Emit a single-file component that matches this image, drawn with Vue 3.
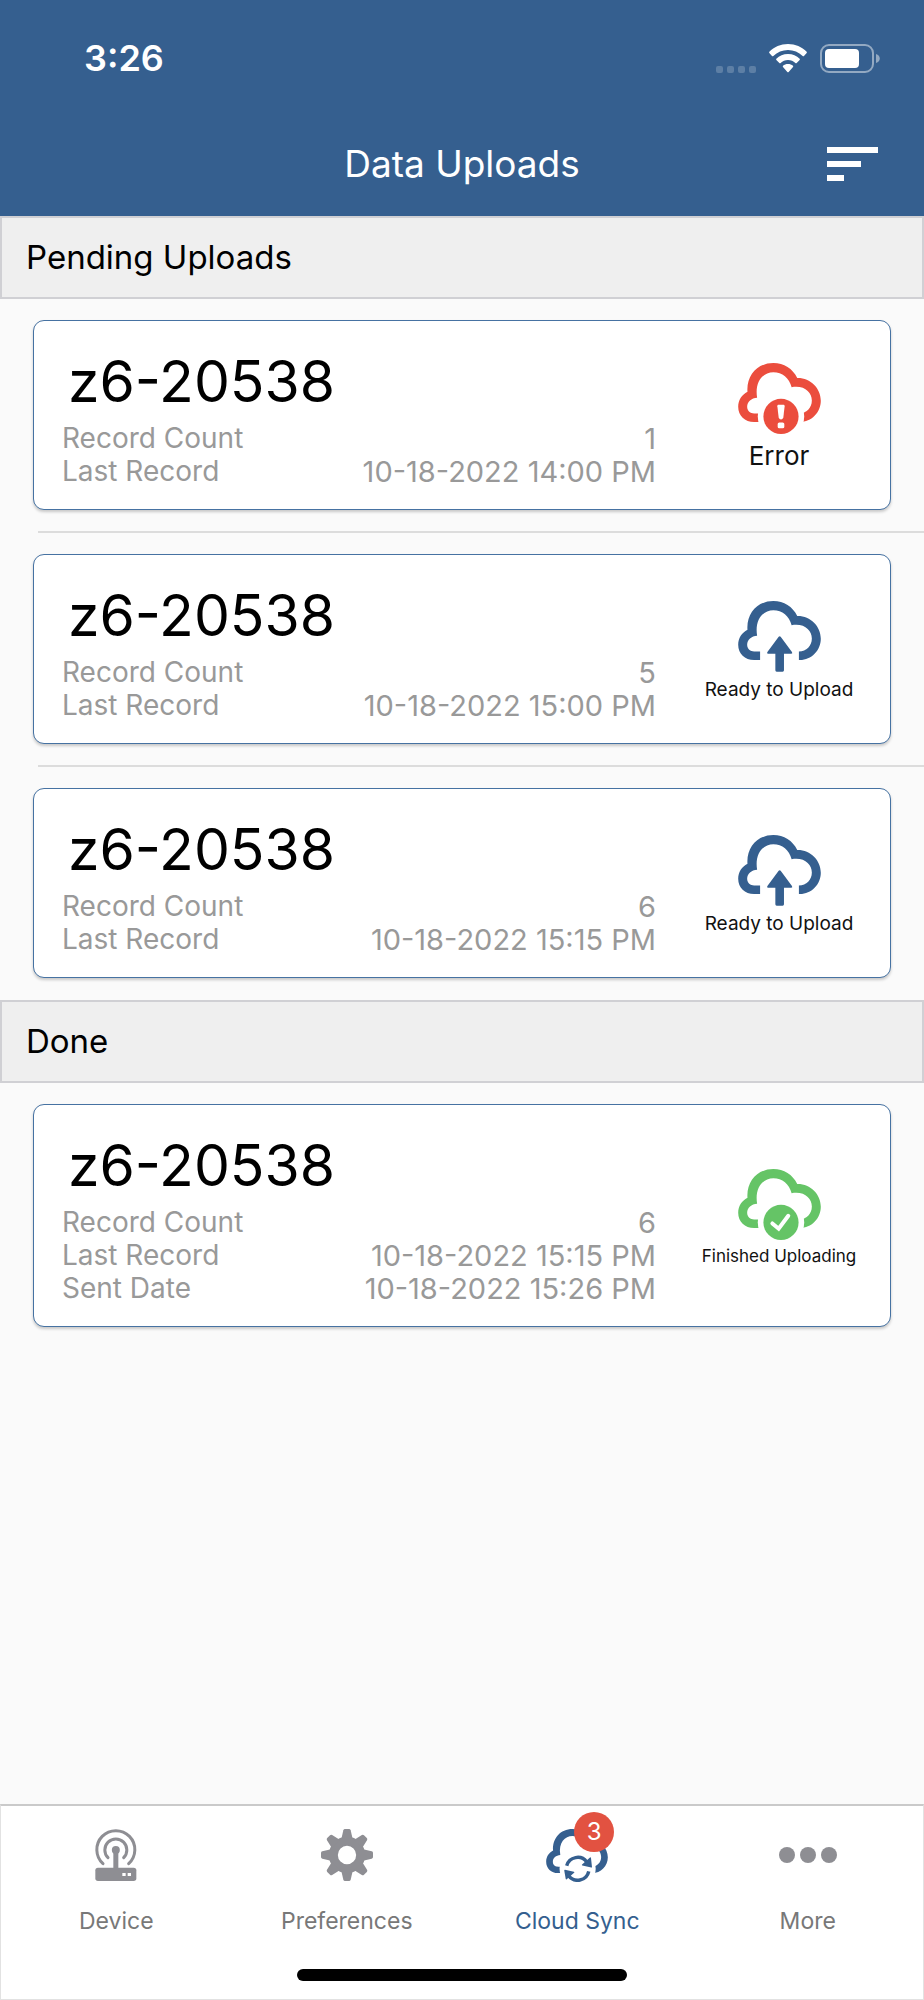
<template>
  <div class="app">
    <header class="header">
      <div class="status-bar">
        <span class="time">3:26</span>
        <div class="status-icons">
          <span class="signal"><i v-for="n in 4" :key="n"></i></span>
          <svg class="wifi" width="38" height="29" viewBox="0 0 114 87" fill="#fff">
            <path d="M57 0C35 0 15 9 1 23c-1 1-1 3 0 4l8 9c1 1 3 1 4 0C25 25 40 18 57 18s32 7 44 18c1 1 3 1 4 0l8-9c1-1 1-3 0-4C99 9 79 0 57 0z" />
            <path d="M57 30c-14 0-26 5-35 14-1 1-1 3 0 4l9 9c1 1 3 1 4 0 6-5 13-9 22-9s16 4 22 9c1 1 3 1 4 0l9-9c1-1 1-3 0-4-9-9-21-14-35-14z" />
            <path d="M57 60c-6 0-11 2-15 5-1 1-1 3 0 4l13 15c1 1 3 1 4 0l13-15c1-1 1-3 0-4-4-3-9-5-15-5z" />
          </svg>
          <svg width="60" height="29" viewBox="0 0 60 29">
            <rect x="1" y="1" width="52" height="27" rx="8" fill="none" stroke="#93a9c2" stroke-width="2" />
            <rect x="5" y="5" width="34" height="19" rx="4" fill="#fff" />
            <path d="M56 10c5 1 5 8 0 9z" fill="#93a9c2" />
          </svg>
        </div>
      </div>
      <div class="nav-bar">
        <h1 class="title">Data Uploads</h1>
        <button class="sort-btn" type="button" aria-label="Sort">
          <svg width="51" height="34" viewBox="0 0 51 34" fill="#fff">
            <rect width="51" height="6" />
            <rect y="14" width="34" height="6" />
            <rect y="28" width="17" height="6" />
          </svg>
        </button>
      </div>
    </header>

    <main class="content">
      <section v-for="section in sections" :key="section.title">
        <h2 class="section-title">{{ section.title }}</h2>
        <ul class="upload-list">
          <li v-for="(item, index) in section.items" :key="index" class="upload-item">
            <article class="card">
              <div class="details">
                <h3 class="device-name">{{ item.name }}</h3>
                <dl class="records">
                  <div v-for="row in item.rows" :key="row.label" class="record">
                    <dt>{{ row.label }}</dt>
                    <dd>{{ row.value }}</dd>
                  </div>
                </dl>
              </div>
              <div class="status" :class="item.status">
                <svg width="83" height="71" viewBox="0 0 249 214" fill="currentColor">
                  <path :d="cloudPath" />
                  <path v-if="item.status === 'ready'" d="M122 108q3-4 6 0l34 46q3 5-2 5h-22v50q0 4-4 4h-18q-4 0-4-4v-50H90q-5 0-2-5z" />
                  <template v-else>
                    <circle cx="129" cy="161" r="70" fill="#fff" />
                    <circle cx="129" cy="161" r="53" />
                    <template v-if="item.status === 'error'">
                      <path d="M121 126h16q3 0 3 4l-4 34q-2 6-7 6t-7-6l-4-34q0-4 3-4z" fill="#fff" />
                      <rect x="119" y="179" width="20" height="18" rx="5" fill="#fff" />
                    </template>
                    <path v-else d="M103 164l19 16 29-39" fill="none" stroke="#fff" stroke-width="12" stroke-linecap="round" stroke-linejoin="miter" />
                  </template>
                </svg>
                <span class="status-text">{{ statusText[item.status] }}</span>
              </div>
            </article>
          </li>
        </ul>
      </section>
    </main>

    <footer class="tab-bar">
      <nav class="tabs">
        <a
          v-for="tab in tabs"
          :key="tab.id"
          href="#"
          class="tab"
          :class="{ active: activeTab === tab.id }"
          @click.prevent="activeTab = tab.id"
        >
          <span class="tab-icon">
            <svg v-if="tab.id === 'device'" width="42" height="52" viewBox="0 0 126 156" fill="none" stroke="currentColor" stroke-width="9" stroke-linecap="round">
              <path d="M24 104A57 57 0 1 1 101 104" />
              <path d="M39 86A33 33 0 1 1 86 86" />
              <path d="M62.500 63V120" stroke-width="15" />
              <circle cx="62.500" cy="63" r="12" fill="currentColor" stroke="none" />
              <rect x="1" y="116" width="123" height="40" rx="8" fill="currentColor" stroke="none" />
              <path d="M82 132h10v9H82zM98 132h10v9H98z" fill="#fff" stroke="none" />
            </svg>
            <svg v-else-if="tab.id === 'preferences'" width="52" height="52" viewBox="0 0 156 156" fill="currentColor">
              <circle cx="78" cy="78" r="41" fill="none" stroke="currentColor" stroke-width="27" />
              <path
                v-for="n in 8"
                :key="n"
                d="M61 30l6-26q1-4 5-4h12q4 0 5 4l6 26z"
                :transform="`rotate(${n * 45} 78 78)`"
              />
            </svg>
            <svg v-else-if="tab.id === 'sync'" width="62" height="53" viewBox="0 0 249 214" fill="currentColor">
              <path :d="cloudPath" />
              <circle cx="127" cy="160" r="73" fill="#fff" />
              <path d="M83 148A46 46 0 0 1 164 133M172 171A46 46 0 0 1 90 188" fill="none" stroke="currentColor" stroke-width="14" />
              <path d="M178 114q3 0 3 3l4 36q0 3-3 2l-36-8q-4-2-1-4z" />
              <path d="M73 168q0-3 3-3l36 8q4 2 1 4l-30 26q-3 2-4-1z" />
            </svg>
            <svg v-else width="58" height="16" viewBox="0 0 58 16" fill="currentColor">
              <circle cx="8" cy="8" r="8" />
              <circle cx="29" cy="8" r="8" />
              <circle cx="50" cy="8" r="8" />
            </svg>
            <span v-if="tab.badge" class="badge">{{ tab.badge }}</span>
          </span>
          <span class="tab-label">{{ tab.label }}</span>
        </a>
      </nav>
      <div class="home-indicator"></div>
    </footer>
  </div>
</template>

<script setup>
import { ref } from 'vue';

const activeTab = ref('sync');

const cloudPath =
  'M66 178H48C20 178 0 159 0 132C0 112 11 96 28 87C24 38 58 0 106 0C138 0 164 17 178 45' +
  'C217 44 249 75 249 114C249 151 218 180 183 178V152C206 152 222 135 222 113' +
  'C222 88 199 66 161 73C154 46 133 28 106 28C76 28 49 54 57 105C40 106 27 117 27 132C27 145 37 152 48 152H66Z';

const statusText = {
  error: 'Error',
  ready: 'Ready to Upload',
  finished: 'Finished Uploading'
};

const sections = [
  {
    title: 'Pending Uploads',
    items: [
      {
        name: 'z6-20538',
        status: 'error',
        rows: [
          { label: 'Record Count', value: '1' },
          { label: 'Last Record', value: '10-18-2022 14:00 PM' }
        ]
      },
      {
        name: 'z6-20538',
        status: 'ready',
        rows: [
          { label: 'Record Count', value: '5' },
          { label: 'Last Record', value: '10-18-2022 15:00 PM' }
        ]
      },
      {
        name: 'z6-20538',
        status: 'ready',
        rows: [
          { label: 'Record Count', value: '6' },
          { label: 'Last Record', value: '10-18-2022 15:15 PM' }
        ]
      }
    ]
  },
  {
    title: 'Done',
    items: [
      {
        name: 'z6-20538',
        status: 'finished',
        rows: [
          { label: 'Record Count', value: '6' },
          { label: 'Last Record', value: '10-18-2022 15:15 PM' },
          { label: 'Sent Date', value: '10-18-2022 15:26 PM' }
        ]
      }
    ]
  }
];

const tabs = [
  { id: 'device', label: 'Device' },
  { id: 'preferences', label: 'Preferences' },
  { id: 'sync', label: 'Cloud Sync', badge: 3 },
  { id: 'more', label: 'More' }
];
</script>

<style>
body {
  margin: 0;
  background: #fafafa;
}
</style>

<style scoped>
.app {
  display: flex;
  flex-direction: column;
  min-height: 100vh;
  background: #fafafa;
  color: #000;
  font-family: Inter, "Liberation Sans", sans-serif;
}

svg {
  display: block;
}

.header {
  background: #355f8f;
  color: #fff;
}

.status-bar {
  display: flex;
  align-items: center;
  justify-content: space-between;
  height: 44px;
  padding: 36px 44px 32px 84px;
}

.time {
  font-size: 36px;
  font-weight: 600;
  line-height: 44px;
}

.status-icons {
  display: flex;
  align-items: center;
  gap: 13px;
}

.signal {
  display: flex;
  align-self: flex-end;
  gap: 4px;
}

.signal i {
  width: 7px;
  height: 7px;
  border-radius: 2px;
  background: #5d7fa5;
}

.nav-bar {
  display: grid;
  grid-template-columns: 1fr auto 1fr;
  align-items: center;
  height: 104px;
  padding: 0 46px;
}

.title {
  grid-column: 2;
  margin: 0;
  font-size: 37px;
  font-weight: 400;
  line-height: 44px;
}

.sort-btn {
  justify-self: end;
  padding: 0;
  border: none;
  background: none;
  cursor: pointer;
}

.content {
  flex: 1;
}

.section-title {
  margin: 0;
  padding: 20px 24px 21px;
  border: 2px solid #d0d0d4;
  background: #efefef;
  font-size: 33px;
  font-weight: 400;
  line-height: 38px;
}

.upload-list {
  margin: 0;
  padding: 0;
  list-style: none;
}

.upload-item {
  padding: 21px 33px;
}

/* separator runs from the card's edge to the right side of the screen */
.upload-item + .upload-item {
  padding-top: 23px;
  background: linear-gradient(#dcdcdc, #dcdcdc) 38px 0 / 100% 2px no-repeat;
}

.upload-item:last-child {
  padding-bottom: 22px;
}

.card {
  display: flex;
  box-sizing: border-box;
  border: 1px solid #4672a2;
  border-radius: 11px;
  background: #fff;
  box-shadow: 0 2px 3px rgba(0, 0, 0, 0.2);
}

.details {
  flex: 1;
  padding: 27px 12px 21px 28px;
}

.device-name {
  margin: 0 0 6px 6px;
  font-size: 57px;
  font-weight: 400;
  line-height: 68px;
}

.records {
  margin: 0;
  color: #999;
  font-size: 28px;
  line-height: 33px;
}

.record {
  display: flex;
  justify-content: space-between;
}

.record dd {
  margin: 0;
  font-size: 29px;
}

.status {
  display: flex;
  flex-direction: column;
  align-items: center;
  justify-content: center;
  gap: 6px;
  width: 222px;
  padding-top: 4px;
}

.status-text {
  color: #111;
}

.error {
  color: #eb4d3d;
  font-size: 26px;
}

.ready {
  color: #355f8f;
  font-size: 19px;
}

.finished {
  color: #65c466;
  font-size: 17px;
}

.tab-bar {
  position: sticky;
  bottom: 0;
  box-sizing: border-box;
  padding-bottom: 18px;
  border: 1px solid #e2e2e2;
  border-top: 2px solid #cacaca;
  background: #fff;
}

.tabs {
  display: grid;
  grid-template-columns: repeat(4, 1fr);
}

.tab {
  display: flex;
  flex-direction: column;
  align-items: center;
  gap: 26px;
  padding: 23px 0 34px;
  color: #8e8e93;
  text-decoration: none;
}

.tab-icon {
  position: relative;
  display: flex;
  align-items: center;
  justify-content: center;
  width: 62px;
  height: 52px;
}

.badge {
  position: absolute;
  top: -17px;
  left: 28px;
  width: 40px;
  border-radius: 20px;
  background: #e25241;
  color: #fff;
  font-size: 24px;
  line-height: 40px;
  text-align: center;
}

.tab-label {
  color: #787878;
  font-size: 23px;
  line-height: 28px;
}

.tab.active,
.active .tab-label {
  color: #355f8f;
}

.home-indicator {
  width: 330px;
  height: 12px;
  margin: 0 auto;
  border-radius: 6px;
  background: #000;
}
</style>
